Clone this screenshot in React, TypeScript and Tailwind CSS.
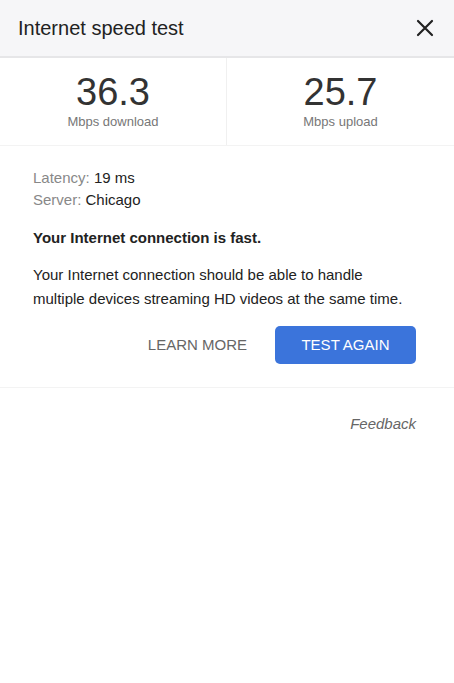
export default function App() {
  return (
    <div className="min-h-[683px] w-[454px] bg-white font-['Liberation_Sans',Arial,sans-serif]">
      <header className="flex h-[58px] items-center justify-between border-b-2 border-[#e6e6e8] bg-[#f6f6f8] pl-[18px] pr-[20px]">
        <h1 className="text-[20px] text-[#222]">Internet speed test</h1>
        <svg width="18" height="18" viewBox="0 0 18 18" className="text-[#222]">
          <path d="M2 2 L16 16 M16 2 L2 16" stroke="currentColor" strokeWidth="2.2" strokeLinecap="round" />
        </svg>
      </header>

      <section className="border-b border-[#f3f3f3]">
        <div className="grid h-[87px] grid-cols-2">
          <div className="flex flex-col items-center border-r border-[#f0f0f0] pt-[13px]">
            <span className="text-[38px] leading-[43px] text-[#333]">36.3</span>
            <span className="text-[13px] leading-[15px] text-[#777]">Mbps download</span>
          </div>
          <div className="flex flex-col items-center pt-[13px]">
            <span className="text-[38px] leading-[43px] text-[#333]">25.7</span>
            <span className="text-[13px] leading-[15px] text-[#777]">Mbps upload</span>
          </div>
        </div>
      </section>

      <section className="border-b border-[#f3f3f3] pb-[23px] pl-[33px] pr-[33px] pt-[21px]">
        <p className="text-[15px] leading-[22px] text-[#888]">
          Latency: <span className="text-[#222]">19 ms</span>
        </p>
        <p className="text-[15px] leading-[22px] text-[#888]">
          Server: <span className="text-[#222]">Chicago</span>
        </p>
        <p className="mt-[16px] text-[15px] font-bold leading-[22px] text-[#222]">
          Your Internet connection is fast.
        </p>
        <p className="mt-[14px] max-w-[384px] text-[15px] leading-[24px] text-[#222]">
          Your Internet connection should be able to handle multiple devices streaming HD videos at the same time.
        </p>
        <div className="mr-[5px] mt-[15px] flex items-center justify-end gap-[28px]">
          <button className="text-[15px] text-[#666]">LEARN MORE</button>
          <button className="h-[38px] w-[141px] rounded-[5px] bg-[#3b74db] text-[15px] text-white">TEST AGAIN</button>
        </div>
      </section>

      <div className="flex justify-end pr-[38px] pt-[25px]">
        <span className="text-[15px] italic text-[#666]">Feedback</span>
      </div>
    </div>
  );
}
